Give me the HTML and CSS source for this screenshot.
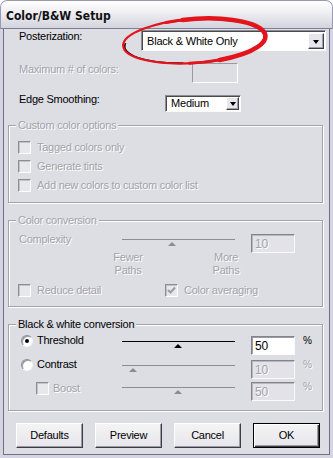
FILE: index.html
```html
<!DOCTYPE html>
<html>
<head>
<meta charset="utf-8">
<link rel="stylesheet" href="styles.css">
</head>
<body>
<div class="window">
  <div class="titlebar"><span class="title">Color/B&amp;W Setup</span></div>
  <div class="client">
    <div class="row row-post">
      <span class="lbl lbl-post">Posterization:</span>
      <div class="combo combo-wide"><span class="combo-text">Black &amp; White Only</span><span class="drop-btn"><i class="arrow"></i></span></div>
    </div>
    <div class="row row-max">
      <span class="lbl lbl-max dis">Maximum # of colors:</span>
      <div class="edit-empty"></div>
    </div>
    <div class="row row-edge">
      <span class="lbl lbl-edge">Edge Smoothing:</span>
      <div class="combo combo-small"><span class="combo-text">Medium</span><span class="drop-btn"><i class="arrow"></i></span></div>
    </div>

    <div class="group g1">
      <span class="legend dis">Custom color options</span>
      <div class="check-row"><span class="cb"></span><span class="dis">Tagged colors only</span></div>
      <div class="check-row"><span class="cb"></span><span class="dis">Generate tints</span></div>
      <div class="check-row"><span class="cb"></span><span class="dis">Add new colors to custom color list</span></div>
    </div>

    <div class="group g2">
      <span class="legend dis">Color conversion</span>
      <div class="srow">
        <div class="s-label"><span class="dis cx">Complexity</span></div>
        <div class="slider dim"><span class="track"></span><span class="thumb" style="left:44%"></span></div>
        <div class="edit edit-dis"><span class="dis">10</span></div>
      </div>
      <div class="paths">
        <span class="p1 dis">Fewer<br>Paths</span>
        <span class="p2 dis">More<br>Paths</span>
      </div>
      <div class="check-pair">
        <div class="check-row cr-left"><span class="cb"></span><span class="dis">Reduce detail</span></div>
        <div class="check-row"><span class="cb"><svg class="tick" viewBox="0 0 11 11" width="11" height="11"><path d="M2 5 L4.5 7.5 L9 2.5" fill="none" stroke="#9a9aa2" stroke-width="2"/></svg></span><span class="dis">Color averaging</span></div>
      </div>
    </div>

    <div class="group g3">
      <span class="legend">Black &amp; white conversion</span>
      <div class="srow">
        <div class="s-label"><span class="radio on"></span><span class="rl">Threshold</span></div>
        <div class="slider"><span class="track"></span><span class="thumb" style="left:49.6%"></span></div>
        <div class="edit edit-on"><span>50</span></div>
        <span class="pct">%</span>
      </div>
      <div class="srow r2">
        <div class="s-label"><span class="radio"></span><span class="rl">Contrast</span></div>
        <div class="slider dim"><span class="track"></span><span class="thumb" style="left:9.7%"></span></div>
        <div class="edit edit-dis"><span class="dis">10</span></div>
        <span class="pct dis">%</span>
      </div>
      <div class="srow r3">
        <div class="s-label boost"><span class="cb"></span><span class="dis">Boost</span></div>
        <div class="slider dim"><span class="track"></span><span class="thumb" style="left:49.6%"></span></div>
        <div class="edit edit-dis"><span class="dis">50</span></div>
        <span class="pct dis">%</span>
      </div>
    </div>

    <div class="buttons">
      <div class="btn">Defaults</div>
      <div class="btn">Preview</div>
      <div class="btn">Cancel</div>
      <div class="btn btn-default">OK</div>
    </div>
  </div>

  <svg class="scribble" width="156" height="60" viewBox="0 0 156 60">
    <g transform="translate(2 2) rotate(-4 76 27)">
      <path d="M63.9 48.2 A69.5 20.5 0 0 1 7.6 24.4" fill="none" stroke="#2a0000" stroke-width="1.6"/>
      <ellipse cx="76" cy="27" rx="71" ry="22" fill="none" stroke="#e3141c" stroke-width="2.2"/>
      <path d="M49.4 6.6 A71 22 0 1 1 69.8 48.9" fill="none" stroke="#e3141c" stroke-width="3" stroke-linecap="round"/>
      <path d="M66.1 5.2 A71 22 0 0 1 100.3 47.7" fill="none" stroke="#e3141c" stroke-width="4.5" stroke-linecap="round"/>
    </g>
  </svg>
</div>
</body>
</html>
```

FILE: styles.css
```css
* { box-sizing: border-box; }
html, body { margin: 0; padding: 0; }
body {
  width: 333px;
  height: 458px;
  overflow: hidden;
  background: #ffffff;
  font-family: "Liberation Sans", Arial, sans-serif;
  font-size: 11px;
  letter-spacing: -0.25px;
  line-height: 13px;
  color: #000;
}
.window {
  position: relative;
  width: 333px;
  height: 458px;
  background: #d5d5e1;
  border-radius: 7px 7px 0 0;
  overflow: hidden;
}
.titlebar {
  height: 29px;
  border: 1px solid #9a9aae;
  border-bottom-color: #7e7e98;
  border-radius: 7px 7px 0 0;
  background: linear-gradient(#ffffff, #f2f2f6 35%, #d3d3dd);
  padding: 8px 0 0 5px;
}
.title {
  font-family: "DejaVu Sans Condensed", "DejaVu Sans", sans-serif;
  font-stretch: condensed;
  font-weight: bold;
  font-size: 12px;
  letter-spacing: 0;
  line-height: 14px;
  color: #111;
}
.client {
  margin: 0 3px;
  height: 426px;
  border: 1px solid #6f6f8c;
  border-top: 0;
  background: #dddde4;
  padding: 1px 0 0 4px;
}
.dis {
  color: #a3a3ab;
  text-shadow: 1px 1px 0 #ffffff;
}
.row { display: flex; padding-left: 11px; }
.lbl { display: block; }
.row-post { height: 21px; }
.lbl-post { width: 122px; }
.row-max { height: 20px; margin-top: 12px; }
.lbl-max { width: 173px; }
.row-edge { height: 17px; margin-top: 12px; }
.lbl-edge { width: 146px; margin-top: -2px; }

.combo {
  display: flex;
  align-items: stretch;
  justify-content: space-between;
  background: #fff;
  border: 1px solid;
  border-color: #8c8c96 #fbfbfb #fbfbfb #8c8c96;
  box-shadow: inset 1px 1px 0 #4a4a4a;
}
.combo-wide { width: 185px; height: 21px; padding: 2px 1px 1px 2px; }
.combo-small { width: 76px; height: 17px; padding: 1px 1px 1px 2px; }
.combo-text { display: flex; align-items: center; padding-left: 3px; letter-spacing: -0.2px; }
.combo-wide .drop-btn { width: 16px; }
.combo-small .drop-btn { width: 13px; }
.drop-btn {
  display: flex;
  align-items: center;
  justify-content: center;
  background: #e6e6ec;
  border: 1px solid;
  border-color: #ffffff #404048 #404048 #ffffff;
  box-shadow: inset -1px -1px 0 #a0a0aa;
}
.arrow {
  display: block;
  width: 1px;
  height: 0;
  border-left: 3px solid transparent;
  border-right: 3px solid transparent;
  border-top: 4px solid #000;
  margin-top: 1px;
}
.edit-empty {
  width: 46px;
  height: 20px;
  border: 1px solid;
  border-color: #9a9aa2 #ffffff #ffffff #9a9aa2;
}

.group {
  position: relative;
  width: 315px;
  border: 1px solid #a2a2ae;
  box-shadow: inset 1px 1px 0 #ffffff, 1px 1px 0 #ffffff;
}
.legend {
  position: absolute;
  top: -7px;
  left: 7px;
  padding: 0 2px;
  background: #dddde4;
  line-height: 13px;
}
.g1 { margin-top: 13px; padding: 12px 0 7px 9px; }
.g2 { margin-top: 17px; padding: 13px 0 6px 9px; }
.g3 { margin-top: 17px; padding: 11px 0 9px 9px; }

.check-row { display: flex; align-items: center; height: 19px; gap: 6px; }
.cb {
  display: flex;
  align-items: center;
  justify-content: center;
  width: 13px;
  height: 13px;
  border: 1px solid;
  border-color: #8c8c96 #ffffff #ffffff #8c8c96;
  box-shadow: inset 1px 1px 0 #c2c2ca;
  background: #e7e7ec;
  flex: none;
}
.tick { display: block; }

.srow { display: flex; height: 19px; }
.g3 .r2 { margin-top: 5px; }
.g3 .r3 { margin-top: 3px; }
.s-label {
  width: 104px;
  display: flex;
  align-items: center;
  height: 13px;
  margin-top: -2px;
}
.cx { margin-left: 1px; margin-top: 1px; }
.radio {
  position: relative;
  width: 12px;
  height: 12px;
  margin-left: 3px;
  margin-right: 4px;
  border-radius: 50%;
  background: #fff;
  border: 1px solid;
  border-color: #8c8c96 #f4f4f4 #f4f4f4 #8c8c96;
  box-shadow: inset 1px 1px 0 #9a9aa2;
  flex: none;
}
.radio.on::after {
  content: "";
  position: absolute;
  left: 3px;
  top: 3px;
  width: 4px;
  height: 4px;
  border-radius: 50%;
  background: #000;
}
.boost { margin-top: 0; }
.boost .cb { margin-left: 18px; margin-right: 4px; }

.slider { position: relative; width: 113px; height: 19px; }
.track {
  position: absolute;
  left: 0;
  right: 0;
  top: 5px;
  height: 1px;
  background: #000;
}
.thumb {
  position: absolute;
  top: 8px;
  width: 0;
  height: 0;
  margin-left: -4px;
  border-left: 4px solid transparent;
  border-right: 4px solid transparent;
  border-bottom: 4px solid #000;
}
.slider.dim .track { background: #8c8c94; }
.slider.dim .thumb { border-bottom-color: #8c8c94; }

.edit {
  width: 44px;
  height: 19px;
  margin-left: 16px;
  border: 1px solid;
  border-color: #84848c #fafafa #fafafa #84848c;
  box-shadow: inset 1px 1px 0 #b8b8c0;
  padding: 2px 0 0 3px;
  line-height: 14px;
  font-size: 12px;
}
.edit-on { background: #ffffff; box-shadow: inset 1px 1px 0 #9a9aa2; }
.edit-dis { background: #e2e2e8; }
.pct { margin-left: 8px; margin-top: -1px; font-size: 10px; line-height: 12px; }

.paths { display: flex; height: 26px; margin-top: -2px; }
.p1 { margin-left: 80px; width: 60px; text-align: center; }
.p2 { margin-left: 38px; width: 60px; text-align: center; }
.check-pair { display: flex; margin-top: 4px; }
.cr-left { width: 147px; }

.buttons { display: flex; gap: 12px; margin-top: 12px; padding-left: 8px; }
.btn {
  width: 67px;
  height: 25px;
  display: flex;
  align-items: center;
  justify-content: center;
  background: linear-gradient(#f4f4f6, #e6e6eb);
  border: 1px solid;
  border-color: #ffffff #3c3c44 #3c3c44 #ffffff;
  box-shadow: inset -1px -1px 0 #9c9ca6;
}
.btn-default {
  border-color: #000;
  box-shadow: inset 1px 1px 0 #ffffff, inset -1px -1px 0 #3c3c44, inset -2px -2px 0 #9c9ca6;
}

.scribble {
  position: absolute;
  left: 116px;
  top: 12px;
}
```
